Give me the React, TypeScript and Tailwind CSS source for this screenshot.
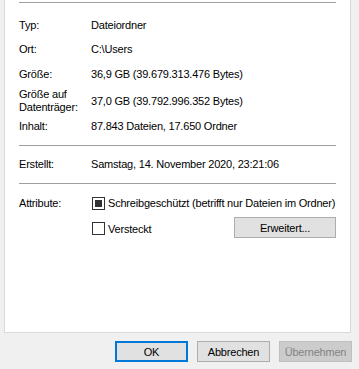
const Row = ({ label, value, top }: { label: string; value: string; top: string }) => (
  <div className={`flex ${top}`}>
    <div className="w-[72px] shrink-0">{label}</div>
    <div>{value}</div>
  </div>
);

const Divider = ({ m }: { m: string }) => <div className={`h-px bg-[#a0a0a0] ${m}`} />;

export default function App() {
  return (
    <div
      className="w-[359px] h-[369px] bg-[#f0f0f0] text-[11px] leading-[14px] tracking-[-0.2px] whitespace-nowrap text-black overflow-hidden"
      style={{ fontFamily: '"Liberation Sans", Arial, sans-serif' }}
    >
      <div className="ml-[4px] w-[347px] h-[333px] bg-white border-x border-b border-[#d9d9d9] pl-[14px] pr-[14px] pt-[2px]">
        <Divider m="" />
        <Row label="Typ:" value="Dateiordner" top="mt-[15px]" />
        <Row label="Ort:" value="C:\Users" top="mt-[10px]" />
        <Row label="Größe:" value="36,9 GB (39.679.313.476 Bytes)" top="mt-[11px]" />
        <div className="flex mt-[7px] items-center">
          <div className="w-[72px] shrink-0 leading-[13px]">
            <div>Größe auf</div>
            <div>Datenträger:</div>
          </div>
          <div>37,0 GB (39.792.996.352 Bytes)</div>
        </div>
        <Row label="Inhalt:" value="87.843 Dateien, 17.650 Ordner" top="mt-[5px]" />
        <Divider m="mt-[12px]" />
        <Row label="Erstellt:" value="Samstag, 14. November 2020, 23:21:06" top="mt-[11px]" />
        <Divider m="mt-[12px]" />
        <div className="flex mt-[12px]">
          <div className="w-[72px] shrink-0">Attribute:</div>
          <div className="flex flex-col flex-1">
            <div className="flex items-center">
              <div className="ml-[1px] w-[13px] h-[13px] border border-[#333] flex items-center justify-center">
                <div className="w-[7px] h-[7px] bg-[#333]" />
              </div>
              <span className="ml-[3px]">Schreibgeschützt (betrifft nur Dateien im Ordner)</span>
            </div>
            <div className="flex items-center mt-[9px]">
              <div className="ml-[1px] w-[13px] h-[13px] border border-[#333]" />
              <span className="ml-[3px]">Versteckt</span>
              <button className="ml-auto -mt-[2px] w-[102px] h-[21px] bg-[#e1e1e1] border border-[#adadad]">
                Erweitert...
              </button>
            </div>
          </div>
        </div>
      </div>
      <div className="flex justify-end gap-[9px] pr-[7px] mt-[8px]">
        <button className="w-[73px] h-[21px] bg-[#e1e1e1] border-2 border-[#0078d7]">OK</button>
        <button className="w-[73px] h-[21px] bg-[#e1e1e1] border border-[#adadad]">Abbrechen</button>
        <button className="w-[73px] h-[21px] bg-[#cccccc] border border-[#bfbfbf] text-[#838383]">Übernehmen</button>
      </div>
    </div>
  );
}
